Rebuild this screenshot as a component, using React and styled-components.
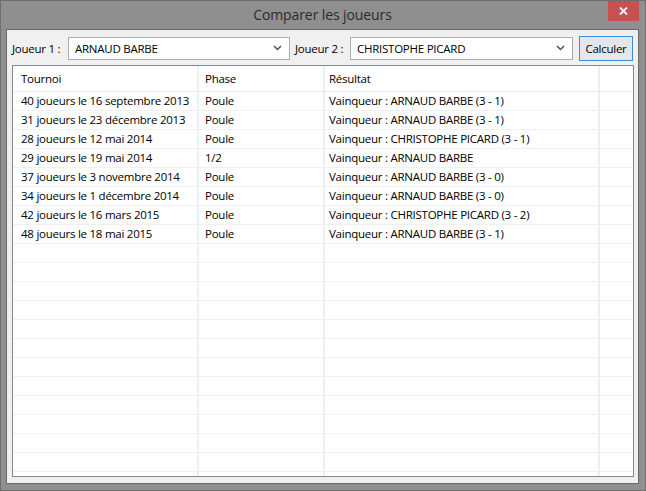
import React from "react";
import styled, { createGlobalStyle } from "styled-components";

const Global = createGlobalStyle`
  html, body { margin: 0; padding: 0; background: #8f8f8f; }
  body { font-family: "Open Sans", "Noto Sans", sans-serif; }
  * { box-sizing: border-box; }
`;

const Window = styled.div`
  position: relative;
  width: 646px;
  height: 491px;
  background: #8f8f8f;
  border: 1px solid #6e6e6e;
  display: flex;
  flex-direction: column;
  padding: 0 6px 6px 5px;
`;

const TitleBar = styled.div`
  height: 28px;
  display: flex;
  align-items: center;
  justify-content: center;
  font-size: 14px;
  letter-spacing: -0.1px;
  color: #2b2b2b;
  padding-bottom: 1px;
`;

const CloseButton = styled.div`
  position: absolute;
  top: 0;
  right: 6px;
  width: 31px;
  height: 20px;
  background: #c75050;
  display: flex;
  align-items: center;
  justify-content: center;
`;

const Client = styled.div`
  flex: 1;
  background: #f0f0f0;
  border: 1px solid #6a6a6a;
  display: flex;
  flex-direction: column;
  padding: 6px 0 6px 0;
  font-size: 11.5px;
  letter-spacing: -0.25px;
  color: #000;
`;

const Toolbar = styled.div`
  display: flex;
  align-items: center;
  height: 25px;
  padding-left: 5px;
`;

const Label = styled.span`
  width: ${(p) => p.$w}px;
  flex: none;
  white-space: nowrap;
`;

const Combo = styled.div`
  width: ${(p) => p.$w}px;
  height: 23px;
  flex: none;
  background: #fff;
  border: 1px solid #acacac;
  display: flex;
  align-items: center;
  justify-content: space-between;
  padding: 0 7px 1px 6px;
  margin-right: ${(p) => p.$mr || 0}px;
`;

const Button = styled.div`
  width: 54px;
  height: 25px;
  flex: none;
  margin-left: 6px;
  background: #e3e6ea;
  border: 1px solid #3c8ce0;
  display: flex;
  align-items: center;
  justify-content: center;
  padding-bottom: 1px;
`;

const Table = styled.div`
  margin: 4px 0 0 5px;
  width: 622px;
  height: 412px;
  border: 1px solid #828790;
  background: #fff;
  overflow: hidden;
`;

const Row = styled.div`
  display: grid;
  grid-template-columns: 186px 126px 275px 1fr;
  height: ${(p) => (p.$header ? 26 : 19)}px;
  border-bottom: 1px solid ${(p) => (p.$header ? "#e6ebf3" : "#f0f0f0")};
`;

const Cell = styled.div`
  border-right: ${(p) => (p.$last ? "none" : "2px solid #e9eef7")};
  padding-left: ${(p) => p.$pl}px;
  display: flex;
  align-items: center;
  white-space: nowrap;
  overflow: hidden;
  padding-bottom: 1px;
`;

const Chevron = () => (
  <svg width="9" height="6" viewBox="0 0 9 6">
    <path d="M1 1 L4.5 4.5 L8 1" fill="none" stroke="#505050" strokeWidth="1.5" />
  </svg>
);

const data = [
  ["40 joueurs le 16 septembre 2013", "Poule", "Vainqueur : ARNAUD BARBE (3 - 1)"],
  ["31 joueurs le 23 décembre 2013", "Poule", "Vainqueur : ARNAUD BARBE (3 - 1)"],
  ["28 joueurs le 12 mai 2014", "Poule", "Vainqueur : CHRISTOPHE PICARD (3 - 1)"],
  ["29 joueurs le 19 mai 2014", "1/2", "Vainqueur : ARNAUD BARBE"],
  ["37 joueurs le 3 novembre 2014", "Poule", "Vainqueur : ARNAUD BARBE (3 - 0)"],
  ["34 joueurs le 1 décembre 2014", "Poule", "Vainqueur : ARNAUD BARBE (3 - 0)"],
  ["42 joueurs le 16 mars 2015", "Poule", "Vainqueur : CHRISTOPHE PICARD (3 - 2)"],
  ["48 joueurs le 18 mai 2015", "Poule", "Vainqueur : ARNAUD BARBE (3 - 1)"],
];

const rows = [...data];
while (rows.length < 21) rows.push(["", "", ""]);

const pads = [8, 6, 4, 0];

export default function App() {
  return (
    <>
      <Global />
      <Window>
        <TitleBar>Comparer les joueurs</TitleBar>
        <CloseButton>
          <svg width="9" height="8" viewBox="0 0 9 8">
            <path d="M1 0.5 L8 7.5 M8 0.5 L1 7.5" stroke="#fff" strokeWidth="1.8" />
          </svg>
        </CloseButton>
        <Client>
          <Toolbar>
            <Label $w={56}>Joueur 1 :</Label>
            <Combo $w={222} $mr={5}>
              <span>ARNAUD BARBE</span>
              <Chevron />
            </Combo>
            <Label $w={55}>Joueur 2 :</Label>
            <Combo $w={223}>
              <span>CHRISTOPHE PICARD</span>
              <Chevron />
            </Combo>
            <Button>Calculer</Button>
          </Toolbar>
          <Table>
            <Row $header>
              {["Tournoi", "Phase", "Résultat", ""].map((t, i) => (
                <Cell key={i} $pl={pads[i]} $last={i === 3}>{t}</Cell>
              ))}
            </Row>
            {rows.map((r, k) => (
              <Row key={k}>
                {[...r, ""].map((t, i) => (
                  <Cell key={i} $pl={pads[i]} $last={i === 3}>{t}</Cell>
                ))}
              </Row>
            ))}
          </Table>
        </Client>
      </Window>
    </>
  );
}
